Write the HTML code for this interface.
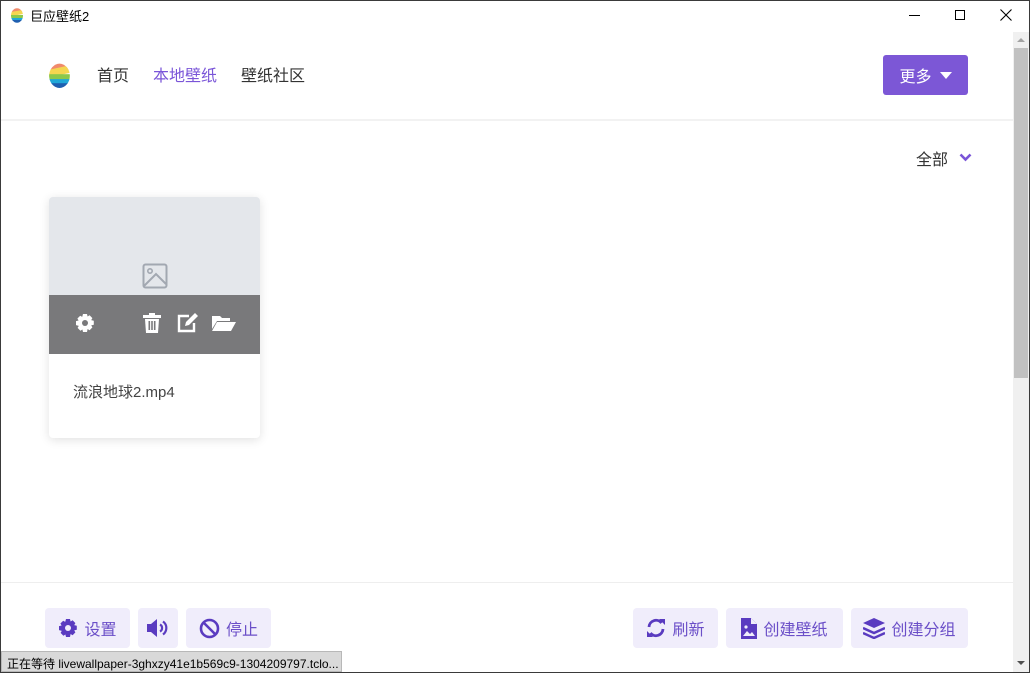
<!DOCTYPE html>
<html><head><meta charset="utf-8">
<style>
*{box-sizing:border-box;margin:0;padding:0}
body{width:1030px;height:673px;overflow:hidden;background:#fff;font-family:"Liberation Sans","Noto Sans CJK SC",sans-serif;position:relative}
.win{position:absolute;left:0;top:0;width:1030px;height:673px;border:1px solid #3a3a3a}
.abs{position:absolute}
.btn{position:absolute;top:608px;height:40px;background:#f0edfb;border-radius:4px;color:#6b4fc8;font-size:16px;display:flex;align-items:center;justify-content:center;gap:6px}
.btn svg{fill:#5a3bc0}
</style></head><body>
<div class="win"></div>
<svg class="abs" style="left:10px;top:7px" width="14" height="16" viewBox="0 0 14 16">
<defs><clipPath id="e1"><ellipse cx="7" cy="8.5" rx="6" ry="7.3"/></clipPath></defs>
<g clip-path="url(#e1)"><rect width="14" height="5" fill="#f08a6c"/><rect y="4" width="14" height="4" fill="#f4d650" transform="rotate(-10 7 6)"/><rect y="8" width="14" height="3" fill="#8cc84b"/><rect y="11" width="14" height="3" fill="#20a8d8"/><rect y="13" width="14" height="4" fill="#1f5fb0"/></g></svg>
<div class="abs" style="left:30px;top:6px;font-size:13px;color:#000">巨应壁纸2</div>
<div class="abs" style="left:909px;top:15px;width:11px;height:1px;background:#000"></div>
<div class="abs" style="left:955px;top:10px;width:10px;height:10px;border:1px solid #000"></div>
<svg class="abs" style="left:1000px;top:9px" width="12" height="12"><path d="M0.5 0.5L11.5 11.5M11.5 0.5L0.5 11.5" stroke="#000" stroke-width="1.1"/></svg>
<div class="abs" style="left:1013px;top:32px;width:16px;height:640px;background:#f0f0f0"></div>
<div class="abs" style="left:1014px;top:48px;width:14px;height:330px;background:#c1c1c1"></div>
<svg class="abs" style="left:1016px;top:37px" width="10" height="6"><path d="M1 5L5 1L9 5Z" fill="#a3a3a3"/></svg>
<svg class="abs" style="left:1016px;top:660px" width="10" height="6"><path d="M1 1L5 5L9 1Z" fill="#505050"/></svg>
<svg class="abs" style="left:48px;top:61px" width="23" height="28" viewBox="0 0 14 16">
<defs><clipPath id="e2"><ellipse cx="7" cy="8.5" rx="6.3" ry="7.4"/></clipPath></defs>
<g clip-path="url(#e2)"><rect width="14" height="5" fill="#f08a6c"/><rect y="3.5" width="16" height="4.5" fill="#f4d650" transform="rotate(-12 7 6)"/><rect y="7.5" width="14" height="3.5" fill="#8cc84b"/><rect y="10.5" width="14" height="3" fill="#20a8d8"/><rect y="13" width="14" height="4" fill="#1f5fb0"/></g></svg>
<div class="abs" style="left:97px;top:62px;font-size:16px;color:#333">首页</div>
<div class="abs" style="left:153px;top:62px;font-size:16px;color:#7a55d8">本地壁纸</div>
<div class="abs" style="left:241px;top:62px;font-size:16px;color:#333">壁纸社区</div>
<div class="abs" style="left:883px;top:55px;width:85px;height:40px;background:#7c57d6;border-radius:3px;color:#fff;font-size:16px;display:flex;align-items:center;justify-content:center;gap:8px">更多<svg width="12" height="7"><path d="M0 0H12L6 7Z" fill="#fff"/></svg></div>
<div class="abs" style="left:1px;top:119px;width:1012px;height:2px;background:#f2f2f2"></div>
<div class="abs" style="left:916px;top:146px;font-size:16px;color:#333">全部</div>
<svg class="abs" style="left:959px;top:153px" width="13" height="9"><path d="M1.5 1.5L6.5 6.5L11.5 1.5" stroke="#7a55d8" stroke-width="2.6" fill="none"/></svg>
<div class="abs" style="left:49px;top:197px;width:211px;height:241px;border-radius:4px;background:#fff;box-shadow:0 2px 10px rgba(0,0,0,.12);overflow:hidden">
<div style="height:98px;background:#e4e7eb"></div>
<div style="height:59px;background:#79797b"></div>
<div style="position:absolute;left:24px;top:184px;font-size:15px;color:#444">流浪地球2.mp4</div>
</div>
<svg class="abs" style="left:142px;top:263px" width="26" height="26" viewBox="0 0 26 26"><rect x="1.5" y="1.5" width="23" height="23" rx="2" stroke="#a2a8b1" stroke-width="2" fill="none"/><circle cx="8" cy="8" r="2.2" stroke="#a2a8b1" stroke-width="1.6" fill="none"/><path d="M2 23L14 11L24 21" stroke="#a2a8b1" stroke-width="2" fill="none"/></svg>
<svg class="abs" style="left:75px;top:313px" width="20" height="20" viewBox="0 0 20 20" fill="#fff"><path d="M8 1h4l.6 2.5 2-1.2 2.8 2.8-1.2 2 2.6.7v4l-2.6.6 1.2 2-2.8 2.8-2-1.2L12 19H8l-.6-2.5-2 1.2-2.8-2.8 1.2-2L1 12.1v-4l2.6-.6-1.2-2 2.8-2.8 2 1.2Z"/><circle cx="10" cy="10" r="3" fill="#79797b"/></svg>
<svg class="abs" style="left:143px;top:313px" width="18" height="20" viewBox="0 0 18 20" fill="#fff"><rect x="0" y="2" width="18" height="3"/><rect x="6" y="0" width="6" height="3"/><path d="M2 6H16L15 20H3Z"/><rect x="5.5" y="8" width="1.6" height="9" fill="#79797b"/><rect x="8.2" y="8" width="1.6" height="9" fill="#79797b"/><rect x="10.9" y="8" width="1.6" height="9" fill="#79797b"/></svg>
<svg class="abs" style="left:177px;top:313px" width="22" height="20" viewBox="0 0 22 20"><path d="M12 3H2v15h15V10" stroke="#fff" stroke-width="2.4" fill="none"/><path d="M8 13l1-4L18 0l3 3-9 9Z" fill="#fff"/></svg>
<svg class="abs" style="left:212px;top:315px" width="24" height="16" viewBox="0 0 24 16" fill="#fff"><path d="M0 1h8l2 2h8v3H5L0 14Z"/><path d="M5 7h19l-5 9H0Z"/></svg>
<div class="abs" style="left:1px;top:582px;width:1012px;height:1px;background:#eee"></div>
<div class="btn" style="left:45px;width:85px"><svg width="20" height="20" viewBox="0 0 20 20"><path d="M8 1h4l.6 2.5 2-1.2 2.8 2.8-1.2 2 2.6.7v4l-2.6.6 1.2 2-2.8 2.8-2-1.2L12 19H8l-.6-2.5-2 1.2-2.8-2.8 1.2-2L1 12.1v-4l2.6-.6-1.2-2 2.8-2.8 2 1.2Z"/><circle cx="10" cy="10" r="3" fill="#f0edfb"/></svg>设置</div>
<div class="btn" style="left:138px;width:40px"><svg width="24" height="20" viewBox="0 0 24 20"><path d="M1 6h4l6-5v18l-6-5H1Z"/><path d="M14 6.5a4 4 0 0 1 0 7M17 3.5a8 8 0 0 1 0 13" stroke="#5a3bc0" stroke-width="2.2" fill="none"/></svg></div>
<div class="btn" style="left:186px;width:85px"><svg width="21" height="21" viewBox="0 0 21 21"><circle cx="10.5" cy="10.5" r="8.5" stroke="#5a3bc0" stroke-width="2.6" fill="none"/><path d="M4.5 4.5L16.5 16.5" stroke="#5a3bc0" stroke-width="2.6"/></svg>停止</div>
<div class="btn" style="left:633px;width:85px"><svg width="20" height="20" viewBox="0 0 20 20"><path d="M3 9A7 7 0 0 1 15.5 5" stroke="#5a3bc0" stroke-width="2.8" fill="none"/><path d="M13 1h6v6Z"/><path d="M17 11A7 7 0 0 1 4.5 15" stroke="#5a3bc0" stroke-width="2.8" fill="none"/><path d="M7 19H1v-6Z"/></svg>刷新</div>
<div class="btn" style="left:726px;width:117px"><svg width="16" height="21" viewBox="0 0 16 21"><path d="M0 0h10l6 6v15H0Z"/><path d="M10 0v6h6" fill="#f0edfb"/><path d="M2 18l4-5 3 3 2-2 3 4Z" fill="#f0edfb"/><circle cx="5" cy="9" r="1.6" fill="#f0edfb"/></svg>创建壁纸</div>
<div class="btn" style="left:851px;width:117px"><svg width="22" height="21" viewBox="0 0 22 21"><path d="M11 0L22 5 11 10 0 5Z"/><path d="M0 10l11 5 11-5M0 15l11 5 11-5" stroke="#5a3bc0" stroke-width="2.4" fill="none"/></svg>创建分组</div>
<div class="abs" style="left:1px;top:651px;width:341px;height:21px;background:#d9d9d9;border:1px solid #b8b8b8;font-size:12px;color:#000;padding:3px 5px;white-space:nowrap;overflow:hidden">正在等待 livewallpaper-3ghxzy41e1b569c9-1304209797.tclo...</div>
</body></html>
